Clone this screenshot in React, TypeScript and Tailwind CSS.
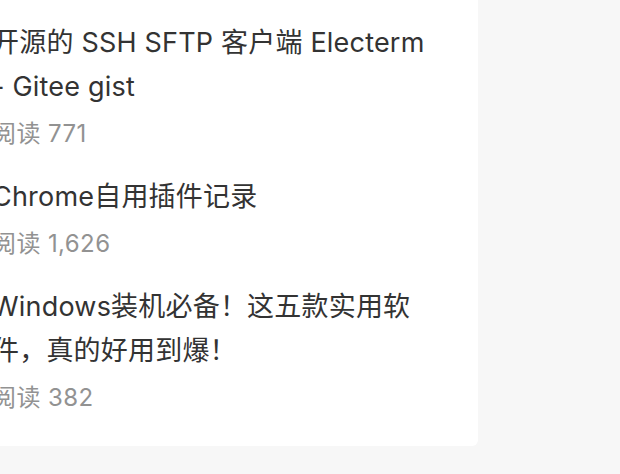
const articles = [
  { id: 1, title: "开源的 SSH SFTP 客户端 Electerm - Gitee gist", views: "771" },
  { id: 2, title: "Chrome自用插件记录", views: "1,626" },
  { id: 3, title: "Windows装机必备！这五款实用软件，真的好用到爆！", views: "382" },
];

export default function App() {
  return (
    <div
      className="min-h-[474px] w-[620px] overflow-hidden bg-[#f7f7f7]"
      style={{ fontFamily: 'Inter, "Noto Sans CJK SC", sans-serif' }}
    >
      {/* related articles card, cropped on the left */}
      <div className="ml-[-40px] w-[518px] rounded-b-md bg-white pl-[32px] pr-[47px] pt-[21px] pb-[30px]">
        <div className="flex flex-col gap-[23px]">
          {articles.map(({ id, title, views }) => (
            <div key={id} className="flex flex-col">
              <div className="text-[27px] leading-[44px] tracking-[0.2px] text-[#333333]">{title}</div>
              <div className="mt-[7px] text-[24px] leading-[36px] tracking-[0.4px] text-[#929292]">
                阅读 {views}
              </div>
            </div>
          ))}
        </div>
      </div>
    </div>
  );
}
